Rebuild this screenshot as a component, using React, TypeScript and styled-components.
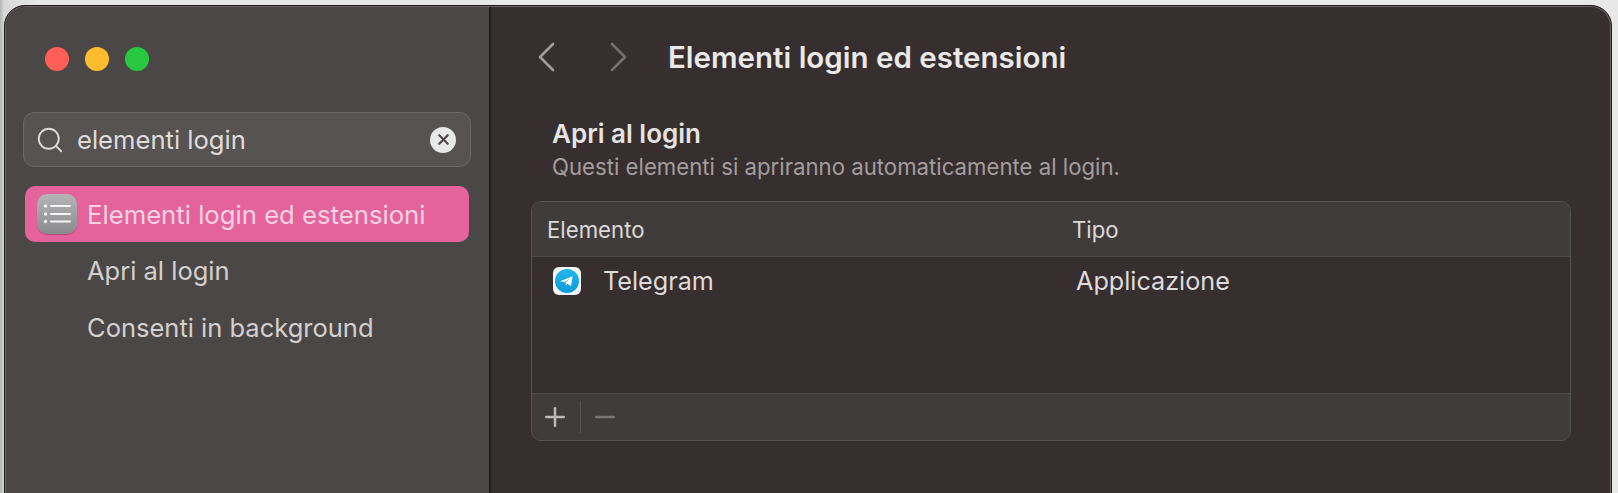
import styled, { createGlobalStyle } from 'styled-components'
import { Search, X, Plus, Minus } from 'lucide-react'

const GlobalStyle = createGlobalStyle`
    html, body, #root {
        margin: 0;
        height: 100%;
        overflow: hidden;
    }
    body {
        font-family: Inter, "Noto Sans", "Liberation Sans", sans-serif;
        -webkit-font-smoothing: antialiased;
    }
`

const Desktop = styled.div`
    height: 100%;
    box-sizing: border-box;
    padding: 5px 6px 0 4px;
    background: linear-gradient(90deg, #b4b4b4 0, #d8d8d8 4px, #e8e8e8 40px, #e8e8e8 100%);
    overflow: hidden;
`

const Window = styled.div`
    display: flex;
    height: 540px;
    border-radius: 21px;
    background: #372e2f;
    border: 1px solid #1c1a1a;
    box-shadow: inset 0 0 0 1px #6a6766;
    overflow: hidden;
    box-sizing: border-box;
`

const Sidebar = styled.aside`
    width: 485px;
    flex: none;
    box-sizing: border-box;
    background: #4b4746;
    border-right: 2px solid #1e1b1b;
    padding: 0 18px 0 17px;
    margin: 1px 0 1px 1px;
    border-top-left-radius: 20px;
`

const Lights = styled.div`
    display: flex;
    gap: 16px;
    padding: 40px 0 0 22px;
    height: 24px;
`

const Light = styled.span<{ $color: string }>`
    width: 24px;
    height: 24px;
    border-radius: 50%;
    background: ${(p) => p.$color};
`

const SearchBox = styled.div`
    display: flex;
    align-items: center;
    height: 55px;
    margin-top: 41px;
    padding: 0 14px 0 11px;
    box-sizing: border-box;
    border-radius: 11px;
    background: #575352;
    border: 1px solid #6c6867;
    color: #e4e2e1;
`

const SearchText = styled.span`
    flex: 1;
    margin-left: 12px;
    font-size: 25.6px;
    color: #dfdcdb;
`

const ClearButton = styled.span`
    width: 26px;
    height: 26px;
    border-radius: 50%;
    background: #e8e8e8;
    color: #4b4746;
    display: flex;
    align-items: center;
    justify-content: center;
`

const SelectedRow = styled.div`
    display: flex;
    align-items: center;
    height: 56px;
    margin: 19px 2px 0;
    padding-left: 12px;
    border-radius: 10px;
    background: #e5639b;
    color: #f9d2e5;
    font-size: 25.7px;
`

const SettingsIcon = styled.span`
    width: 40px;
    height: 40px;
    flex: none;
    margin-right: 10px;
    border-radius: 10px;
    background: linear-gradient(180deg, #b5b4b8 0%, #8a898e 100%);
    box-shadow: 0 1px 1px rgba(0, 0, 0, 0.25);
    display: flex;
    align-items: center;
    justify-content: center;
`

const SubRow = styled.div`
    display: flex;
    align-items: center;
    height: 57px;
    margin: 0 2px;
    padding-left: 62px;
    font-size: 25.5px;
    color: #d3d0cf;
`

const Main = styled.main`
    flex: 1;
    min-width: 0;
    box-sizing: border-box;
    padding: 0 40px;
`

const Toolbar = styled.header`
    display: flex;
    align-items: center;
    height: 102px;
    padding-left: 6px;
`

const NavGroup = styled.div`
    display: flex;
    gap: 55px;
    margin-right: 40px;
`

const NavButton = styled.span<{ $dim?: boolean }>`
    display: flex;
    color: ${(p) => (p.$dim ? '#78726f' : '#a29d9c')};
`

const Title = styled.h1`
    margin: 0;
    font-size: 29.5px;
    font-weight: 600;
    color: #ebe9e8;
`

const Section = styled.div`
    padding: 11px 0 0 21px;
`

const SectionTitle = styled.h2`
    margin: 0;
    font-size: 26px;
    font-weight: 600;
    line-height: 30px;
    color: #e6e4e3;
`

const SectionText = styled.p`
    margin: 5px 0 0;
    font-size: 22.2px;
    line-height: 26px;
    color: #a39e9d;
`

const Table = styled.div`
    margin-top: 21px;
    height: 240px;
    box-sizing: border-box;
    display: flex;
    flex-direction: column;
    border: 1px solid #595454;
    border-radius: 10px;
    overflow: hidden;
`

const Cols = styled.div`
    display: grid;
    grid-template-columns: 525px 1fr;
    align-items: center;
`

const TableHead = styled(Cols)`
    height: 54px;
    flex: none;
    padding-left: 15px;
    background: #413c3c;
    border-bottom: 1px solid #514c4c;
    font-size: 22.2px;
    color: #dcd9d8;
`

const TableBody = styled.div`
    flex: 1;
`

const TableRow = styled(Cols)`
    height: 48px;
    padding-left: 21px;
    grid-template-columns: 523px 1fr;
    font-size: 25.2px;
    color: #dedbda;
`

const AppCell = styled.div`
    display: flex;
    align-items: center;
    gap: 22px;
`

const TelegramTile = styled.span`
    width: 28px;
    height: 28px;
    border-radius: 6px;
    background: #f4f4f4;
    display: flex;
    align-items: center;
    justify-content: center;
`

const TableFooter = styled.div`
    height: 46px;
    flex: none;
    display: flex;
    align-items: center;
    background: #413c3c;
    border-top: 1px solid #514c4c;
    padding-left: 8px;
`

const FooterButton = styled.span<{ $dim?: boolean }>`
    display: flex;
    color: ${(p) => (p.$dim ? '#7a7574' : '#bdb9b8')};
`

const FooterDivider = styled.span`
    width: 1px;
    height: 32px;
    margin: 0 9px 0 10px;
    background: #5d5857;
`

function ListGlyph() {
    return (
        <svg width="28" height="22" viewBox="0 0 28 22" fill="none">
            <circle cx="2.5" cy="3" r="1.7" fill="#f4f4f4" />
            <circle cx="2.5" cy="11" r="1.7" fill="#f4f4f4" />
            <circle cx="2.5" cy="18.5" r="1.7" fill="#f4f4f4" />
            <path d="M8 3h19M8 11h19M8 18.5h19" stroke="#f6f6f6" strokeWidth="2" strokeLinecap="round" />
        </svg>
    )
}

function Chevron({ flip }: { flip?: boolean }) {
    return (
        <svg width="18" height="30" viewBox="0 0 18 30" fill="none">
            <path
                d={flip ? 'M2 2 15 15 2 28' : 'M16 2 3 15 16 28'}
                stroke="currentColor"
                strokeWidth="2.6"
                strokeLinecap="round"
                strokeLinejoin="round"
            />
        </svg>
    )
}

function TelegramGlyph() {
    return (
        <svg width="24" height="24" viewBox="0 0 24 24">
            <defs>
                <linearGradient id="tg" x1="0" y1="0" x2="0" y2="1">
                    <stop offset="0" stopColor="#22b5ea" />
                    <stop offset="1" stopColor="#0f9cdc" />
                </linearGradient>
            </defs>
            <circle cx="12" cy="12" r="12" fill="url(#tg)" />
            <path d="M5 12.2 17.6 7.2 16 17.2 12.6 14.8 11 16.4 10.6 13.6 15 9.6 9.2 13.2Z" fill="#fff" />
        </svg>
    )
}

export default function App() {
    return (
        <>
            <GlobalStyle />
            <Desktop>
                <Window>
                    <Sidebar>
                        <Lights>
                            <Light $color="#ff5f57" />
                            <Light $color="#febc2e" />
                            <Light $color="#28c840" />
                        </Lights>
                        <SearchBox>
                            <Search size={30} strokeWidth={1.5} color="#dcdad9" />
                            <SearchText>elementi login</SearchText>
                            <ClearButton>
                                <X size={17} strokeWidth={3} />
                            </ClearButton>
                        </SearchBox>
                        <SelectedRow>
                            <SettingsIcon>
                                <ListGlyph />
                            </SettingsIcon>
                            Elementi login ed estensioni
                        </SelectedRow>
                        <SubRow>Apri al login</SubRow>
                        <SubRow>Consenti in background</SubRow>
                    </Sidebar>
                    <Main>
                        <Toolbar>
                            <NavGroup>
                                <NavButton>
                                    <Chevron />
                                </NavButton>
                                <NavButton $dim>
                                    <Chevron flip />
                                </NavButton>
                            </NavGroup>
                            <Title>Elementi login ed estensioni</Title>
                        </Toolbar>
                        <Section>
                            <SectionTitle>Apri al login</SectionTitle>
                            <SectionText>Questi elementi si apriranno automaticamente al login.</SectionText>
                        </Section>
                        <Table>
                            <TableHead>
                                <span>Elemento</span>
                                <span>Tipo</span>
                            </TableHead>
                            <TableBody>
                                <TableRow>
                                    <AppCell>
                                        <TelegramTile>
                                            <TelegramGlyph />
                                        </TelegramTile>
                                        Telegram
                                    </AppCell>
                                    <span>Applicazione</span>
                                </TableRow>
                            </TableBody>
                            <TableFooter>
                                <FooterButton>
                                    <Plus size={30} strokeWidth={2} />
                                </FooterButton>
                                <FooterDivider />
                                <FooterButton $dim>
                                    <Minus size={30} strokeWidth={2} />
                                </FooterButton>
                            </TableFooter>
                        </Table>
                    </Main>
                </Window>
            </Desktop>
        </>
    )
}
